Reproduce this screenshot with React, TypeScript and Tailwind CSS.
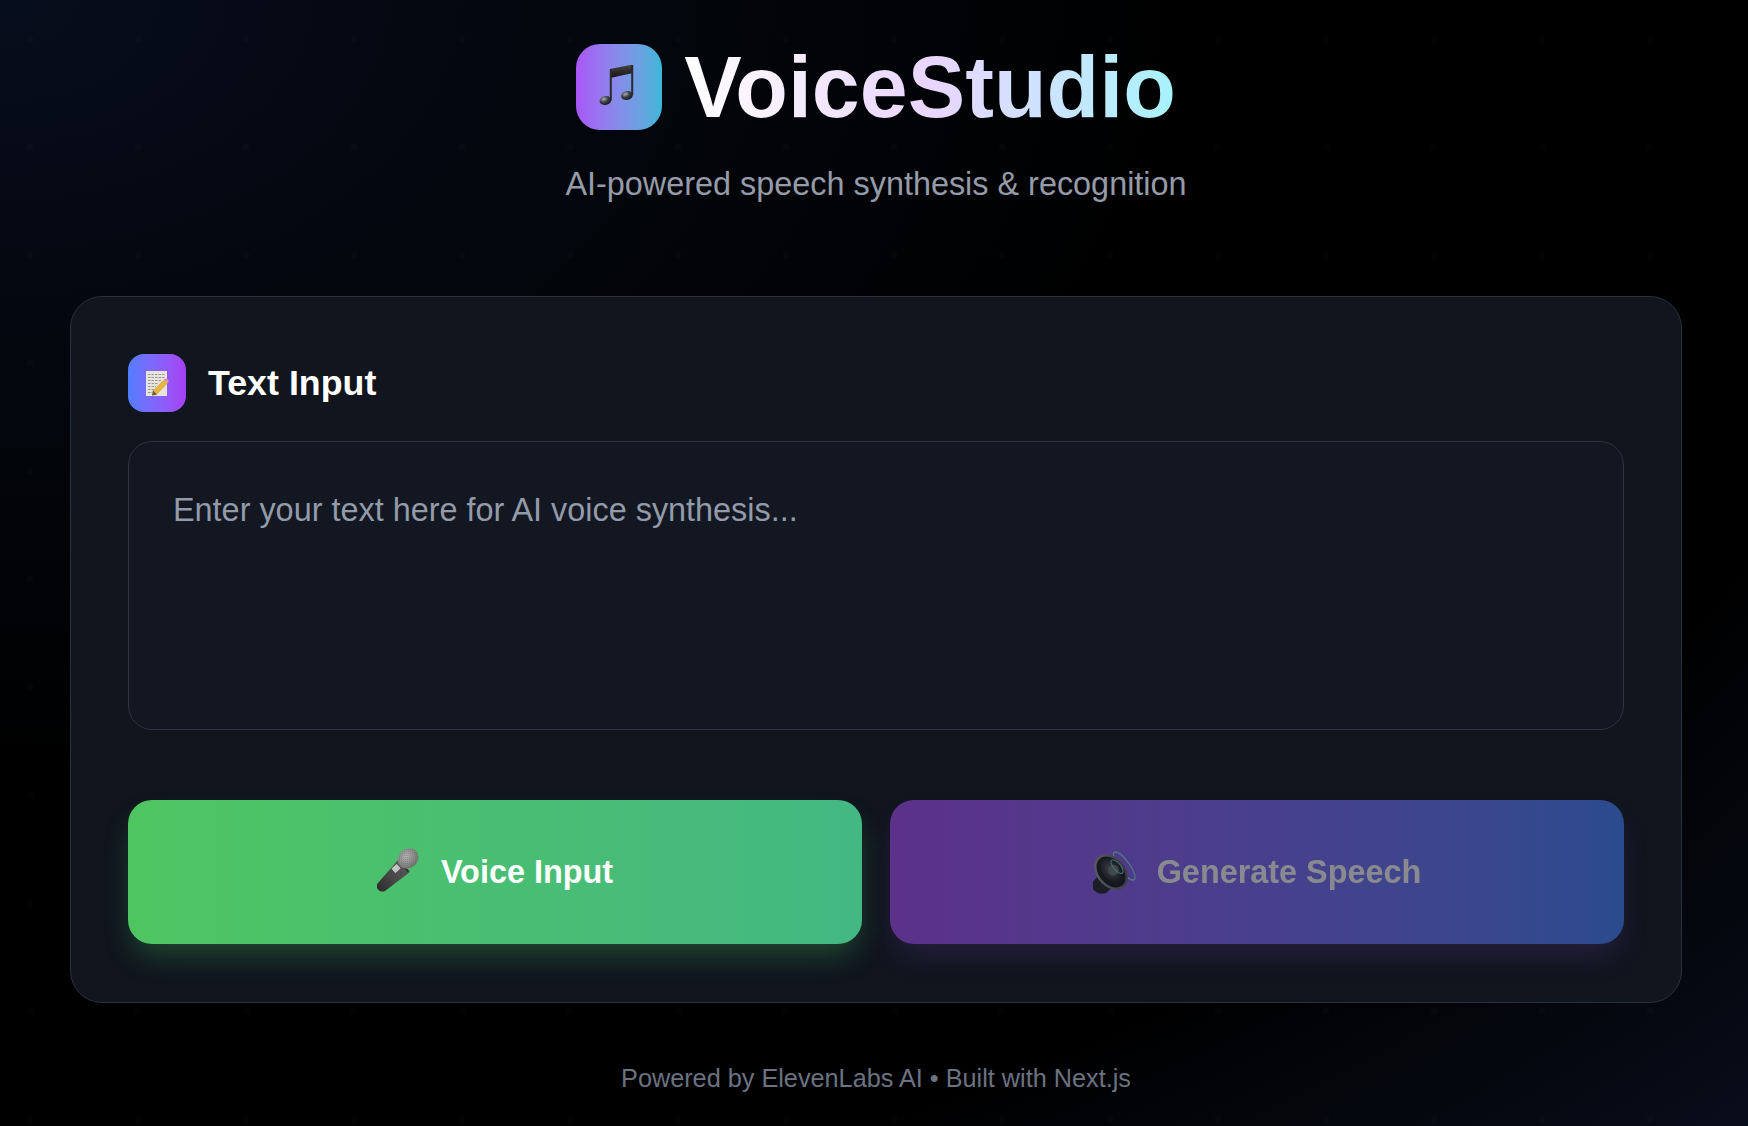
const sans = "font-['Liberation_Sans',Arial,sans-serif]";

function NotesIcon() {
  return (
    <svg width="42" height="44" viewBox="0 3 42 44">
      <defs>
        <linearGradient id="noteBeam" x1="0" y1="0" x2="0" y2="1">
          <stop offset="0" stopColor="#4a4444" />
          <stop offset="1" stopColor="#141214" />
        </linearGradient>
        <radialGradient id="noteHead" cx="0.4" cy="0.3" r="0.8">
          <stop offset="0" stopColor="#a9adb2" />
          <stop offset="0.45" stopColor="#3c3e42" />
          <stop offset="1" stopColor="#111214" />
        </radialGradient>
      </defs>
      <path d="M12 7 L35 2.5 V11 L12 16 Z" fill="url(#noteBeam)" />
      <path d="M12.8 7 V38 M34.2 3 V33" stroke="#2a2a2c" strokeWidth="2" fill="none" />
      <ellipse cx="7.5" cy="38.5" rx="6" ry="4.4" fill="url(#noteHead)" transform="rotate(-14 7.5 38.5)" />
      <ellipse cx="29" cy="33.5" rx="6" ry="4.4" fill="url(#noteHead)" transform="rotate(-14 29 33.5)" />
    </svg>
  );
}

function MemoIcon() {
  return (
    <svg width="24" height="27" viewBox="0 0 24 27">
      <rect x="1" y="1" width="21" height="25" fill="#e6e4dc" />
      <path d="M3 4.5h17M3 7.5h17M3 10.5h13M3 13.5h10M3 16.5h8M3 19.5h6M3 22.5h4" stroke="#85857d" strokeWidth="0.8" strokeDasharray="2.5 1" />
      <path d="M8 20.5 L18.5 10 L22.5 13.5 L12 24.5 L7 25.5 Z" fill="#e4b445" />
      <path d="M18.5 10 L20 8.5 Q22 8 23.5 10 Q24 11.5 22.5 13.5 Z" fill="#d99a97" />
      <path d="M8 20.5 L12 24.5 L7 25.5 Z" fill="#6b5a3c" />
    </svg>
  );
}

function MicIcon() {
  return (
    <svg width="48" height="48" viewBox="11 8 48 48">
      <defs>
        <radialGradient id="micHead" cx="0.5" cy="0.35" r="0.7">
          <stop offset="0" stopColor="#b6b6b6" />
          <stop offset="1" stopColor="#6c6c6c" />
        </radialGradient>
        <linearGradient id="micBody" x1="1" y1="0" x2="0" y2="1">
          <stop offset="0" stopColor="#5c5c5c" />
          <stop offset="0.5" stopColor="#4a4a4a" />
          <stop offset="1" stopColor="#2a2a2a" />
        </linearGradient>
        <pattern id="micMesh" width="2" height="2" patternUnits="userSpaceOnUse" patternTransform="rotate(45)">
          <rect width="1" height="1" fill="#555" opacity="0.45" />
        </pattern>
      </defs>
      <path d="M32 20 L44 32 L19 51 Q15 52.5 12.5 50 Q10 47.5 11.5 43.5 Z" fill="url(#micBody)" />
      <path d="M32.5 21.5 L42.5 31.5" stroke="#333" strokeWidth="2" />
      <rect x="27" y="25" width="6" height="7" rx="0.5" fill="#c2c2c2" transform="rotate(48 30 28.5)" />
      <ellipse cx="42" cy="18.5" rx="11" ry="9.5" transform="rotate(-40 42 18.5)" fill="url(#micHead)" />
      <ellipse cx="42" cy="18.5" rx="11" ry="9.5" transform="rotate(-40 42 18.5)" fill="url(#micMesh)" />
    </svg>
  );
}

function SpeakerIcon() {
  return (
    <svg width="48" height="48" viewBox="10 5.5 40 40">
      <defs>
        <linearGradient id="spkRim" x1="0" y1="0" x2="1" y2="1">
          <stop offset="0" stopColor="#a9a9a9" />
          <stop offset="1" stopColor="#555" />
        </linearGradient>
        <radialGradient id="spkCone" cx="0.55" cy="0.45" r="0.6">
          <stop offset="0" stopColor="#6d7075" />
          <stop offset="0.6" stopColor="#1f2024" />
          <stop offset="1" stopColor="#101114" />
        </radialGradient>
      </defs>
      <ellipse cx="36" cy="20.5" rx="4.5" ry="14" transform="rotate(-36 36 20.5)" fill="none" stroke="#8fd8e6" strokeWidth="1.1" />
      <path d="M15 28 L26 38 L21 43 Q15 45 11 41 Q8 37 10.5 33 Z" fill="#26272b" />
      <ellipse cx="25" cy="25.5" rx="11" ry="15.5" transform="rotate(-40 25 25.5)" fill="url(#spkCone)" stroke="url(#spkRim)" strokeWidth="2" />
      <circle cx="27" cy="24" r="4.5" fill="#75787d" />
      <ellipse cx="30" cy="21" rx="3" ry="7" transform="rotate(-40 30 21)" fill="none" stroke="#6ec6d2" strokeWidth="0.9" />
    </svg>
  );
}

export default function App() {
  return (
    <main className={`relative min-h-[1126px] overflow-hidden bg-[radial-gradient(ellipse_at_0%_0%,#060d1c_0%,#020408_32%,#000000_50%,#000000_78%,#080d1a_100%)] ${sans}`}>
      {/* faint dot grid lying over the page background */}
      <div className="pointer-events-none absolute inset-0 bg-[radial-gradient(circle,rgba(255,255,255,0.012)_3px,transparent_4px)] bg-[length:108px_108px] bg-[position:-24px_-15px]" />
      <div className="relative flex flex-col items-center pt-11 pr-[66px] pl-[70px]">
        <div className="flex items-center gap-[22px]">
          <div className="flex h-[86px] w-[86px] items-center justify-center rounded-3xl bg-gradient-to-r from-[#a855f7] to-[#38b6d8]">
            <NotesIcon />
          </div>
          <h1 className="bg-gradient-to-r from-white via-[#e9d5ff] to-[#a5f3fc] bg-clip-text text-[86.2px] leading-[86px] font-bold text-transparent">
            VoiceStudio
          </h1>
        </div>
        <p className="mt-[34px] text-[32.4px] leading-10 text-[#959ba8]">AI-powered speech synthesis &amp; recognition</p>

        <section className="mt-[92px] w-full rounded-[32px] border border-[#2a303c] bg-[#10151e] px-[57px] pt-[57px] pb-[58px]">
          <div className="flex items-center gap-[22px]">
            <div className="flex h-[58px] w-[58px] items-center justify-center rounded-2xl bg-gradient-to-r from-[#4f7dff] to-[#a63ff5]">
              <MemoIcon />
            </div>
            <h2 className="text-[35.8px] leading-10 font-bold text-white">Text Input</h2>
          </div>
          <div className="mt-[29px] h-[289px] rounded-3xl border border-[#2d3340] bg-[#121722] px-11 pt-12 text-[32.4px] leading-10 text-[#939aa8]">
            Enter your text here for AI voice synthesis...
          </div>
          <div className="mt-[70px] grid grid-cols-2 gap-7">
            <button className="flex h-[144px] items-center justify-center gap-4 rounded-3xl bg-gradient-to-r from-[#4fc561] to-[#43b882] text-[32.4px] font-bold text-white shadow-[0_16px_30px_-6px_rgba(74,200,100,0.3)]">
              <MicIcon />
              Voice Input
            </button>
            <button className="flex h-[144px] items-center justify-center gap-4 rounded-3xl bg-gradient-to-r from-[#a64df4] to-[#4681ff] text-[32.4px] font-bold text-white opacity-50 shadow-[0_16px_30px_-6px_rgba(168,85,247,0.3)]">
              <SpeakerIcon />
              Generate Speech
            </button>
          </div>
        </section>

        <p className="mt-[59px] text-[25.25px] leading-8 text-[#6b7280]">Powered by ElevenLabs AI • Built with Next.js</p>
      </div>
    </main>
  );
}
